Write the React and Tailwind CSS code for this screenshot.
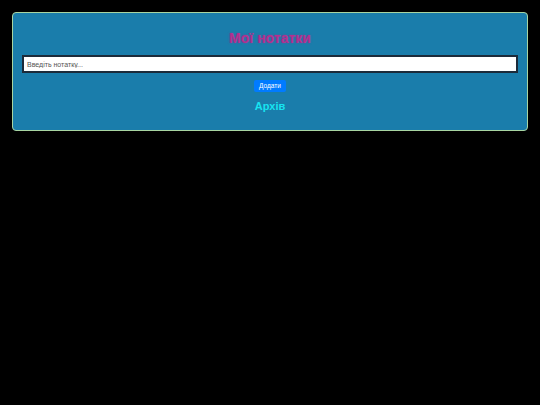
import React, { useState } from 'react'

export default function App() {
  const [text, setText] = useState('')
  const [notes, setNotes] = useState([])

  function addNote() {
    if (!text.trim()) return
    setNotes([...notes, text])
    setText('')
  }

  return (
    <div className="min-h-screen bg-black p-3" style={{ fontFamily: '"Liberation Sans", Arial, sans-serif' }}>
      <div className="rounded-[4px] border border-[#a8d5a2] bg-[#1a7dab] px-[9px] pt-[16px] pb-[17px] flex flex-col items-center">
        <h1 className="h-[18px] text-[14px] leading-[18px] font-bold text-[#b3308f] [text-shadow:0_0_2px_rgba(179,48,143,0.6)]">
          Мої нотатки
        </h1>
        <input
          value={text}
          onChange={e => setText(e.target.value)}
          placeholder="Введіть нотатку..."
          className="mt-[8px] w-full h-[18px] border-2 border-[#1c2b3a] bg-white px-[3px] text-[7px] text-black placeholder:text-[#555] outline-none"
        />
        <button
          onClick={addNote}
          className="mt-[7px] h-[12px] px-[5px] rounded-[2px] bg-[#007bff] text-[6.5px] leading-[12px] text-white"
        >
          Додати
        </button>
        {notes.map((n, i) => (
          <p key={i} className="text-[8px] text-white">{n}</p>
        ))}
        <h2 className="mt-[7px] text-[11px] leading-[14px] font-bold text-[#17e3f0]">Архів</h2>
      </div>
    </div>
  )
}
